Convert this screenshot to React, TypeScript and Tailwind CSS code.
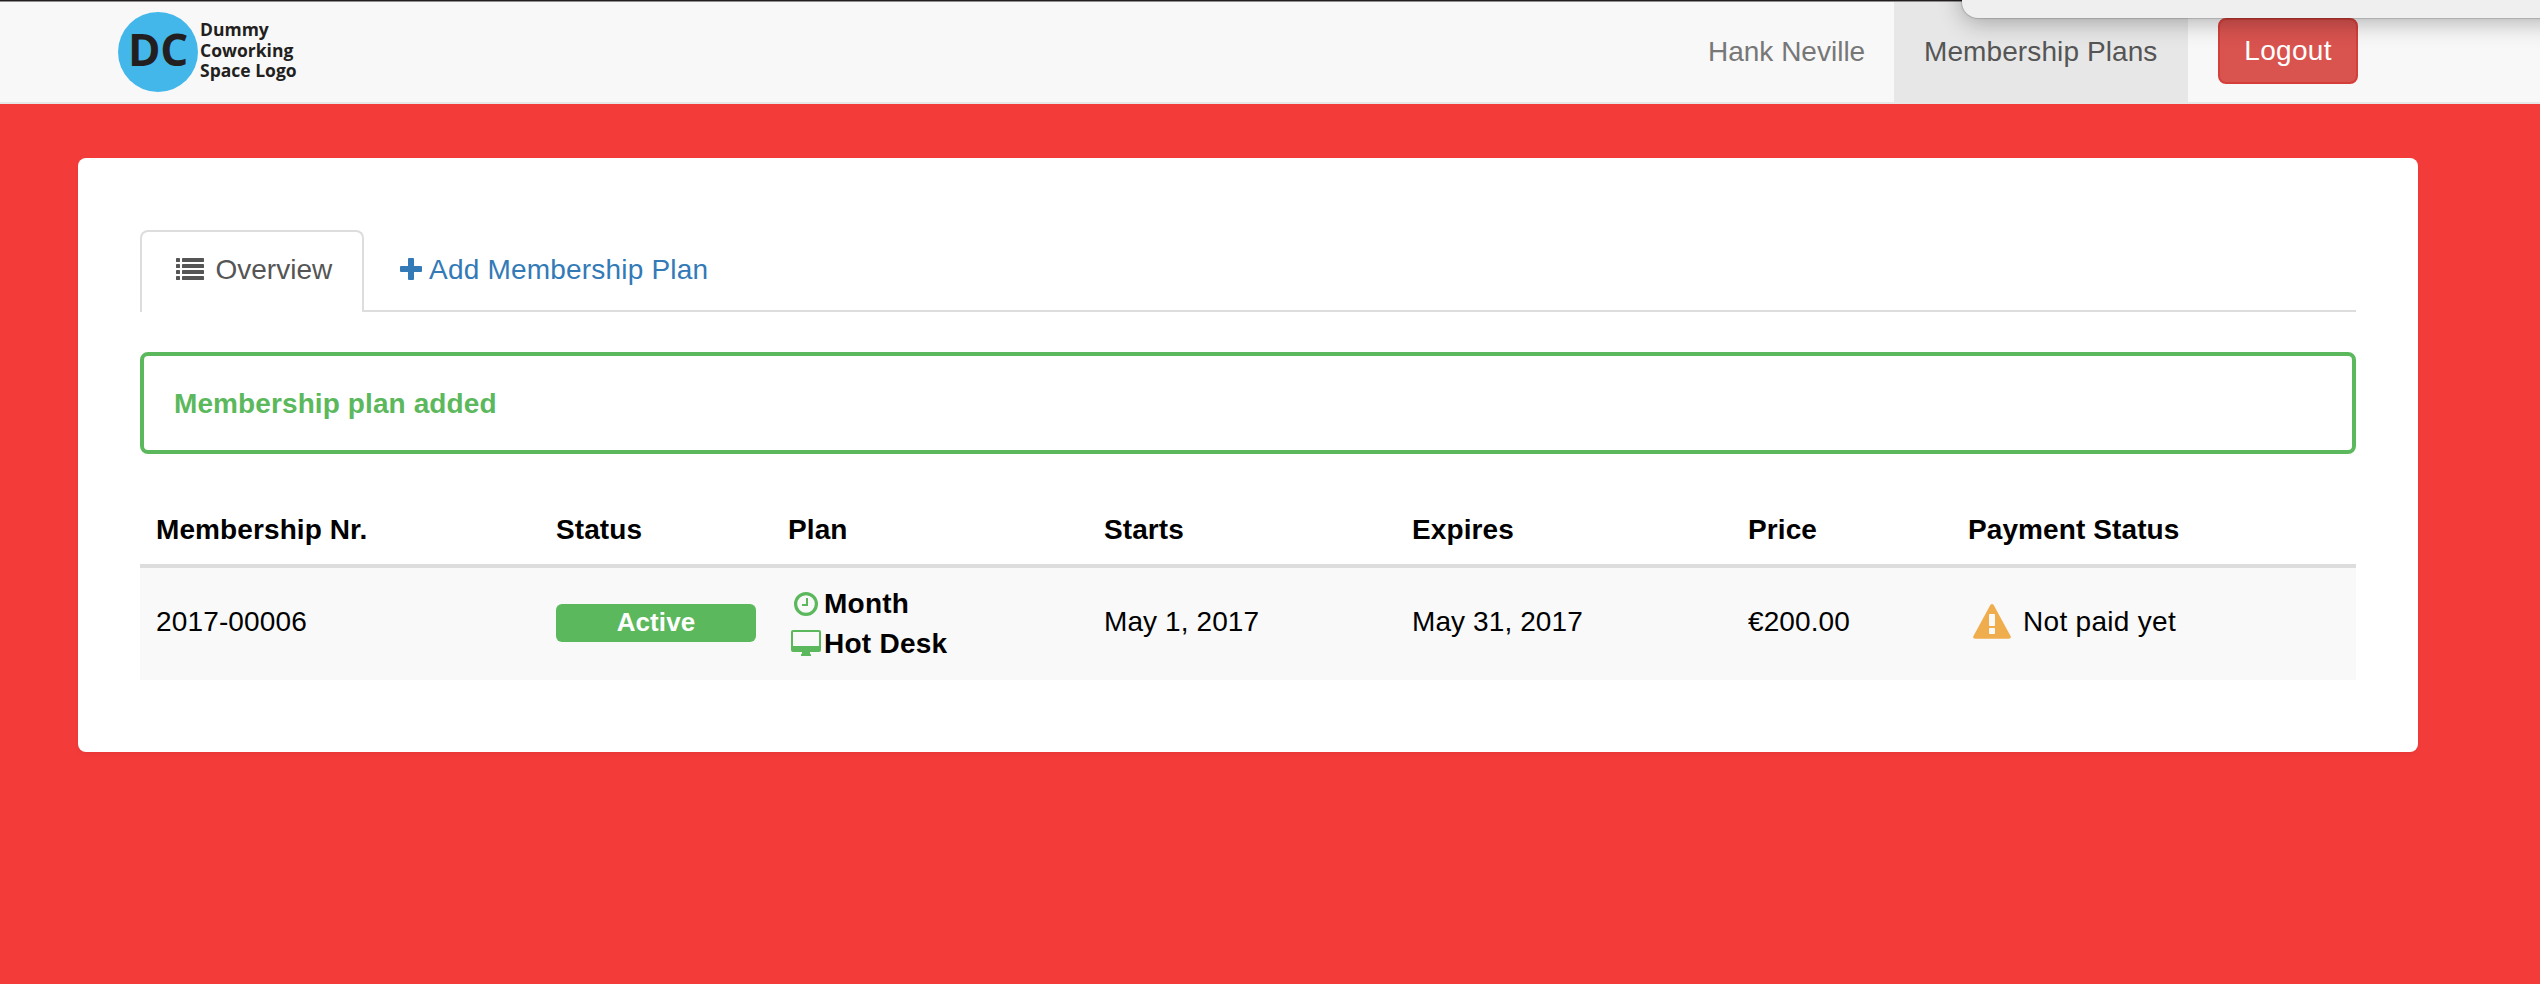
import React from "react";

function ListIcon() {
  return (
    <svg width="28" height="22" viewBox="0 0 28 22" fill="#555555" className="block shrink-0">
      {[0, 6, 12, 18].map((y) => (
        <g key={y}>
          <rect x="0" y={y} width="4" height="4" rx="0.4" />
          <rect x="6" y={y} width="22" height="4" rx="0.4" />
        </g>
      ))}
    </svg>
  );
}

function PlusIcon() {
  return (
    <svg width="22" height="22" viewBox="0 0 22 22" fill="#337ab7" className="block shrink-0">
      <rect x="8" y="0" width="6" height="22" rx="1" />
      <rect x="0" y="8" width="22" height="6" rx="1" />
    </svg>
  );
}

function ClockIcon() {
  return (
    <svg width="24" height="24" viewBox="0 0 24 24" fill="none" stroke="#5cb85c" className="block shrink-0">
      <circle cx="12" cy="12" r="10.4" strokeWidth="3.2" />
      <path d="M13 6v7H8" strokeWidth="2" />
    </svg>
  );
}

function MonitorIcon() {
  return (
    <svg width="30" height="26" viewBox="0 0 30 26" fill="#5cb85c" className="block shrink-0">
      <path
        fillRule="evenodd"
        d="M2 0h26a2 2 0 0 1 2 2v18a2 2 0 0 1-2 2H19v1.500l1 1V26H10v-1.500l1-1V22H2a2 2 0 0 1-2-2V2a2 2 0 0 1 2-2zM2 2v14h26V2z"
      />
    </svg>
  );
}

function WarningIcon() {
  return (
    <svg width="38" height="35" viewBox="0 0 38 35" className="block shrink-0">
      <path d="M17.2 1.2q1.8-2.2 3.6 0L37.4 31.8q1.2 3-1.6 3H2.2q-2.8 0-1.6-3z" fill="#f0ad4e" />
      <rect x="16" y="10" width="6" height="12" rx="0.8" fill="#f9f9f9" />
      <rect x="16" y="24" width="6" height="6" rx="0.8" fill="#f9f9f9" />
    </svg>
  );
}

function Logo() {
  return (
    <div className="flex h-[80px] items-center font-['Open_Sans',sans-serif] font-bold text-[#231f20]">
      <div className="flex size-[80px] justify-center rounded-full bg-[#43b7ea] text-[44px] leading-[74px] tracking-[-0.3px]">
        DC
      </div>
      <div className="pb-[4px] pl-[2px] text-[17.5px] leading-[20.7px]">
        <div>Dummy</div>
        <div>Coworking</div>
        <div>Space Logo</div>
      </div>
    </div>
  );
}

const headings = [
  { label: "Membership Nr.", pad: "pl-[16px]" },
  { label: "Status", pad: "pl-[16px]" },
  { label: "Plan", pad: "pl-[16px]" },
  { label: "Starts", pad: "pl-[17px]" },
  { label: "Expires", pad: "pl-[17px]" },
  { label: "Price", pad: "pl-[17px]" },
  { label: "Payment Status", pad: "pl-[17px]" },
];

export default function App() {
  return (
    <div className="relative h-[984px] w-[2540px] overflow-hidden bg-[#f33b3a] font-['Liberation_Sans',Arial,sans-serif] text-[28px] leading-[40px] text-black">
      <nav className="flex h-[104px] justify-between border-b-2 border-[#e7e7e7] bg-[#f8f8f8] pl-[118px] pr-[182px] pt-[2px] shadow-[inset_0_1px_0_#231f20,inset_0_2px_0_#8f8d8e]">
        <div className="pt-[10px]">
          <Logo />
        </div>
        <div className="flex">
          <a className="block w-[216px] pl-[30px] pt-[30px] text-[#777777]">Hank Neville</a>
          <a className="block w-[294px] whitespace-nowrap bg-[#e7e7e7] pl-[30px] pt-[30px] tracking-[0.1px] text-[#555555]">
            Membership Plans
          </a>
          <button className="ml-[30px] mt-[16px] h-[66px] w-[140px] rounded-lg border-2 border-[#d43f3a] bg-[#d9534f] pb-[1px] tracking-[0.3px] text-white">
            Logout
          </button>
        </div>
      </nav>

      <main className="ml-[78px] mt-[54px] h-[594px] w-[2340px] rounded-lg bg-white px-[62px] pt-[72px] shadow-[0_2px_4px_rgba(0,0,0,0.05)]">
        <div className="flex h-[82px] border-b-2 border-[#dddddd]">
          <a className="flex h-[82px] w-[224px] rounded-t-lg border-2 border-b-0 border-[#dddddd] bg-white pl-[34px] pt-[18px] text-[#555555]">
            <span className="pt-[8px]">
              <ListIcon />
            </span>
            <span className="pl-[11.5px]">Overview</span>
          </a>
          <a className="flex pl-[36px] pt-[20px] text-[#337ab7]">
            <span className="pt-[8px]">
              <PlusIcon />
            </span>
            <span className="pl-[7px] tracking-[0.2px]">Add Membership Plan</span>
          </a>
        </div>

        <div className="mt-[40px] h-[102px] rounded-lg border-4 border-[#5cb85c] pl-[30px] pt-[28px] font-bold tracking-[0.1px] text-[#5cb85c]">
          Membership plan added
        </div>

        <div className="mt-[40px] grid grid-cols-[400px_232px_315px_308px_336px_220px_405px] tracking-[0.1px]">
          {headings.map(({ label, pad }) => (
            <div key={label} className={`h-[74px] border-b-4 border-[#dddddd] pt-[16px] font-bold ${pad}`}>
              {label}
            </div>
          ))}
          <div className="h-[112px] bg-[#f9f9f9] pl-[16px] pt-[34px] tracking-[0.15px]">2017-00006</div>
          <div className="bg-[#f9f9f9] px-[16px] pt-[36px]">
            <div className="h-[38px] rounded-md bg-[#5cb85c] text-center text-[26px] font-bold leading-[37px] text-white">
              Active
            </div>
          </div>
          <div className="bg-[#f9f9f9] pl-[19px] pt-[16px] font-bold tracking-[0.25px]">
            <div className="flex h-[40px]">
              <span className="w-[33px] pl-[3px] pt-[8px]">
                <ClockIcon />
              </span>
              Month
            </div>
            <div className="flex h-[40px]">
              <span className="w-[33px] pt-[6px]">
                <MonitorIcon />
              </span>
              Hot Desk
            </div>
          </div>
          <div className="bg-[#f9f9f9] pl-[17px] pt-[34px]">May 1, 2017</div>
          <div className="bg-[#f9f9f9] pl-[17px] pt-[34px]">May 31, 2017</div>
          <div className="bg-[#f9f9f9] pl-[17px] pt-[34px]">€200.00</div>
          <div className="flex bg-[#f9f9f9] pl-[22px] pt-[34px] tracking-[0.3px]">
            <span className="w-[50px] pt-[2px]">
              <WarningIcon />
            </span>
            Not paid yet
          </div>
        </div>
      </main>

      <div className="absolute left-[1962px] top-[-20px] h-[38px] w-[640px] rounded-bl-[16px] bg-[#efefef] shadow-[0_0_1px_1px_rgba(0,0,0,0.15),0_4px_24px_rgba(0,0,0,0.3)]" />
    </div>
  );
}
